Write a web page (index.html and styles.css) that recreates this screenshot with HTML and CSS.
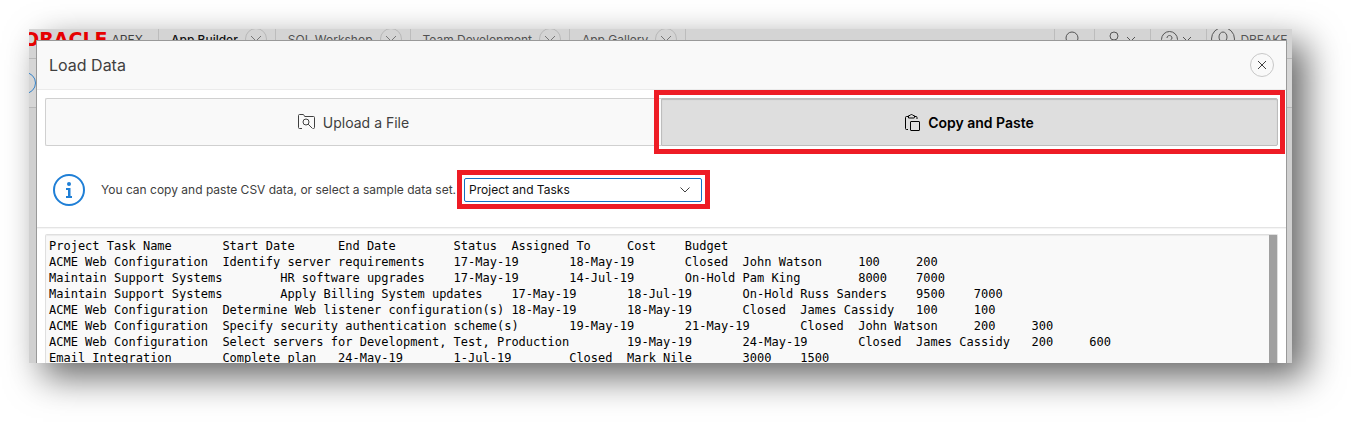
FILE: index.html
```html
<!DOCTYPE html>
<html lang="en">
<head>
<meta charset="utf-8">
<title>Load Data</title>
<link rel="stylesheet" href="styles.css">
</head>
<body>
<div class="frame">
  <header class="topbar">
    <div class="brand"><span class="brand-name">ORACLE</span><span class="brand-product">APEX</span></div>
    <nav class="menu">
      <div class="menu-item menu-item-active"><a href="#">App Builder</a><button class="menu-more" type="button" aria-label="App Builder menu"><svg viewBox="0 0 12 8"><path d="M1 1l5 5 5-5"/></svg></button></div>
      <div class="menu-item"><a href="#">SQL Workshop</a><button class="menu-more" type="button" aria-label="SQL Workshop menu"><svg viewBox="0 0 12 8"><path d="M1 1l5 5 5-5"/></svg></button></div>
      <div class="menu-item"><a href="#">Team Development</a><button class="menu-more" type="button" aria-label="Team Development menu"><svg viewBox="0 0 12 8"><path d="M1 1l5 5 5-5"/></svg></button></div>
      <div class="menu-item"><a href="#">App Gallery</a><button class="menu-more" type="button" aria-label="App Gallery menu"><svg viewBox="0 0 12 8"><path d="M1 1l5 5 5-5"/></svg></button></div>
    </nav>
    <div class="tools">
      <button class="tool tool-search" type="button" aria-label="Search"><svg width="16" height="16" viewBox="0 0 16 16"><circle cx="7" cy="7" r="6"/><path d="M11.500 11.500l4 4"/></svg></button>
      <button class="tool" type="button" aria-label="Administration"><svg width="16" height="16" viewBox="0 0 16 16"><circle cx="8" cy="5" r="4"/><path d="M1 16c0-4 3-6 7-6s7 2 7 6"/></svg><svg width="10" height="6" viewBox="0 0 10 6"><path d="M1 1l4 4 4-4"/></svg></button>
      <button class="tool" type="button" aria-label="Help"><svg width="17" height="17" viewBox="0 0 17 17"><circle cx="8.500" cy="8.500" r="8"/><path d="M6 7c0-3.300 5-3.300 5 0 0 2-2.500 1.800-2.500 4M8.500 12v1"/></svg><svg width="10" height="6" viewBox="0 0 10 6"><path d="M1 1l4 4 4-4"/></svg></button>
      <button class="tool tool-account" type="button"><svg width="24" height="24" viewBox="0 0 24 24"><circle cx="12" cy="12" r="11.500"/><ellipse cx="12" cy="10" rx="4" ry="5"/><path d="M4 20c1-4 4-5 8-5s7 1 8 5"/></svg>DREAKE</button>
    </div>
  </header>
  <div class="crumbs"><button class="crumb-back" type="button" aria-label="Back"><svg width="22" height="22" viewBox="0 0 22 22"><path d="M6 11h6"/></svg></button></div>

  <section class="dialog" role="dialog" aria-labelledby="dialog-title">
    <div class="dialog-head">
      <h1 id="dialog-title">Load Data</h1>
      <button class="close" type="button" aria-label="Close"><svg width="10" height="10" viewBox="0 0 10 10"><path d="M1 1l8 8M9 1l-8 8"/></svg></button>
    </div>
    <div class="modes">
      <button class="mode" type="button"><svg width="17" height="16" viewBox="0 0 17 16"><path d="M4 14.500H1.500q-1 0-1-1v-12q0-1 1-1H5q.7 0 1 .7l.7 1.300h8.800q1 0 1 1v10q0 1-1 1H15"/><circle cx="8" cy="8" r="3"/><path d="M10.200 10.200l4.300 4.300"/></svg>Upload a File</button>
      <button class="mode mode-selected" type="button" aria-pressed="true"><svg width="15" height="17" viewBox="0 0 15 17"><path d="M3.500 2.500h-2q-1 0-1 1v11q0 1 1 1H3M9.500 2.500H11q1 0 1 1V5M3.500 4V2q0-.5.500-.5h1q.3-1 1.500-1t1.500 1h1q.5 0 .5.500v1.500q0 .5-.5.500h-5z"/><rect x="5.500" y="7.500" width="9" height="9" rx=".5"/></svg>Copy and Paste</button>
    </div>
    <div class="source">
      <svg class="info" width="32" height="32" viewBox="0 0 32 32" aria-hidden="true"><circle class="info-ring" cx="16" cy="16" r="15"/><circle cx="16" cy="10" r="2"/><path d="M13 14h4.500v8H19v2h-6v-2h2v-6h-2z"/></svg>
      <label for="sample">You can copy and paste CSV data, or select a sample data set.</label>
      <div class="select-wrap">
        <select id="sample"><option>Project and Tasks</option></select>
        <svg class="select-arrow" width="10" height="6" viewBox="0 0 10 6"><path d="M.5.500L5 5 9.500.500"/></svg>
      </div>
    </div>
    <div class="editor">
      <textarea aria-label="CSV data" wrap="off" spellcheck="false">Project&#9;Task Name&#9;Start Date&#9;End Date&#9;Status&#9;Assigned To&#9;Cost&#9;Budget
ACME Web Configuration&#9;Identify server requirements&#9;17-May-19&#9;18-May-19&#9;Closed&#9;John Watson&#9;100&#9;200
Maintain Support Systems&#9;HR software upgrades&#9;17-May-19&#9;14-Jul-19&#9;On-Hold&#9;Pam King&#9;8000&#9;7000
Maintain Support Systems&#9;Apply Billing System updates&#9;17-May-19&#9;18-Jul-19&#9;On-Hold&#9;Russ Sanders&#9;9500&#9;7000
ACME Web Configuration&#9;Determine Web listener configuration(s)&#9;18-May-19&#9;18-May-19&#9;Closed&#9;James Cassidy&#9;100&#9;100
ACME Web Configuration&#9;Specify security authentication scheme(s)&#9;19-May-19&#9;21-May-19&#9;Closed&#9;John Watson&#9;200&#9;300
ACME Web Configuration&#9;Select servers for Development, Test, Production&#9;19-May-19&#9;24-May-19&#9;Closed&#9;James Cassidy&#9;200&#9;600
Email Integration&#9;Complete plan&#9;24-May-19&#9;1-Jul-19&#9;Closed&#9;Mark Nile&#9;3000&#9;1500</textarea>
      <div class="scroll-thumb"></div>
    </div>
  </section>
</div>
</body>
</html>
```
FILE: styles.css
```css
* {
  box-sizing: border-box;
}

body {
  display: flex;
  min-height: 100vh;
  margin: 0;
  padding: 29px 59px 59px 29px;
  background: #fff;
  color: #404040;
  font-family: Inter, Roboto, sans-serif;
  font-size: 12px;
}

button,
select,
textarea {
  margin: 0;
  border: 0;
  background: none;
  color: inherit;
  font: inherit;
}

svg {
  flex: none;
  fill: none;
  stroke: currentColor;
}

.frame {
  position: relative;
  flex: 1;
  min-width: 0;
  background: #d0d0d0;
  box-shadow: 14px 14px 34px rgba(0, 0, 0, 0.6);
}

/* Application bar behind the dialog */
.topbar {
  display: flex;
  height: 30px;
  overflow: hidden;
  border-bottom: 1px solid #b8b8b8;
  background: #d4d4d4;
  white-space: nowrap;
}

.topbar > * {
  height: 20px;
}

.brand {
  display: flex;
  align-items: center;
  gap: 4px;
  width: 129px;
  margin-left: -6px;
}

.brand-name {
  color: #e60000;
  font: bold 19px "DejaVu Sans", sans-serif;
}

.brand-product {
  font-size: 12px;
}

.menu {
  display: flex;
  flex: 1;
  margin-left: 6px;
  color: #505050;
}

.menu-item {
  display: flex;
  align-items: center;
  gap: 7px;
  padding: 0 8px 0 12px;
  border-left: 1px solid #bcbcbc;
}

.menu-item:last-child {
  border-right: 1px solid #bcbcbc;
}

.menu-item a {
  color: inherit;
  text-decoration: none;
}

.menu-item-active {
  color: #111;
  font-weight: 500;
}

.menu-more {
  display: grid;
  place-items: center;
  width: 22px;
  height: 22px;
  padding: 0;
  border: 1px solid #b8b8b8;
  border-radius: 50%;
  color: #777;
}

.menu-more svg {
  width: 12px;
  height: 8px;
}

.tools {
  display: flex;
}

.tool {
  display: flex;
  align-items: center;
  justify-content: center;
  gap: 4px;
  width: 56px;
  padding: 0 4px 0 0;
  border-left: 1px solid #bcbcbc;
  color: #555;
}

.tool-search {
  width: 40px;
}

.tool-account {
  gap: 5px;
  width: 86px;
  padding: 0;
}

.crumbs {
  height: 49px;
  padding-top: 13px;
  overflow: hidden;
  border-bottom: 1px solid #b8b8b8;
  background: #d6d6d6;
}

.crumb-back {
  display: block;
  width: 22px;
  height: 22px;
  margin-left: -15px;
  padding: 0;
  border: 1px solid #3583c9;
  border-radius: 50%;
}

/* Dialog */
.dialog {
  position: absolute;
  inset: 11px 5px 0 7px;
  display: flex;
  flex-direction: column;
  overflow: hidden;
  border: 1px solid #999;
  border-bottom: 0;
  background: #fff;
}

.dialog-head {
  display: flex;
  align-items: center;
  justify-content: space-between;
  height: 49px;
  padding: 0 12px;
  border-bottom: 1px solid #ebebeb;
  background: #f9f9f9;
}

.dialog-head h1 {
  margin: 0;
  font-size: 16px;
  font-weight: 400;
}

.close {
  display: grid;
  place-items: center;
  width: 24px;
  height: 24px;
  padding: 0;
  border: 1px solid #c8c8c8;
  border-radius: 50%;
}

.modes {
  display: flex;
  padding: 8px 8px 0;
}

.mode {
  display: flex;
  flex: 1;
  align-items: center;
  justify-content: center;
  gap: 8px;
  height: 48px;
  padding: 0;
  border: 1px solid #d0d0d0;
  border-right: 0;
  border-radius: 2px 0 0 2px;
  background: #f9f9f9;
  font-size: 14px;
}

.mode-selected {
  position: relative;
  border: 1px solid #bdbdbd;
  border-radius: 0 2px 2px 0;
  background: #dedede;
  box-shadow: inset 0 1px 1px rgba(0, 0, 0, 0.15);
  color: #000;
  font-weight: 600;
}

.mode-selected::after,
.select-wrap::after {
  content: "";
  position: absolute;
  inset: -9px -8px -9px -8px;
  border: 5px solid #ee1c25;
  pointer-events: none;
}

.source {
  display: flex;
  align-items: center;
  height: 82px;
  padding: 6px 16px 0;
  border-bottom: 1px solid #e4e4e4;
  box-shadow: 0 1px 1px rgba(0, 0, 0, 0.04);
}

.info {
  margin-right: 16px;
  fill: #1f7fd6;
  stroke: none;
}

.info-ring {
  fill: none;
  stroke: #1f7fd6;
  stroke-width: 2;
}

.select-wrap {
  position: relative;
  width: 238px;
  margin-left: 8px;
}

.select-wrap::after {
  inset: -8px -8px -7px -7px;
}

.select-wrap select {
  display: block;
  width: 100%;
  height: 24px;
  padding: 0 4px;
  border: 1px solid #1470c4;
  border-radius: 2px;
  background: #fff;
  color: #111;
  appearance: none;
}

.select-arrow {
  position: absolute;
  top: 9px;
  right: 12px;
}

.editor {
  display: flex;
  flex: 1;
  min-height: 0;
  margin: 6px 8px 0;
  border: 1px solid #dfdfdf;
  border-bottom: 0;
  border-radius: 2px 2px 0 0;
  background: #f9f9f9;
  box-shadow: inset 0 1px 1px rgba(0, 0, 0, 0.06);
}

.editor textarea {
  flex: 1;
  min-width: 0;
  padding: 3px;
  overflow: hidden;
  outline: 0;
  color: #000;
  font: 12px/16px "DejaVu Sans Mono", monospace;
  resize: none;
  tab-size: 8;
  white-space: pre;
}

.scroll-thumb {
  width: 8px;
  background: #a0a0a0;
}
```
